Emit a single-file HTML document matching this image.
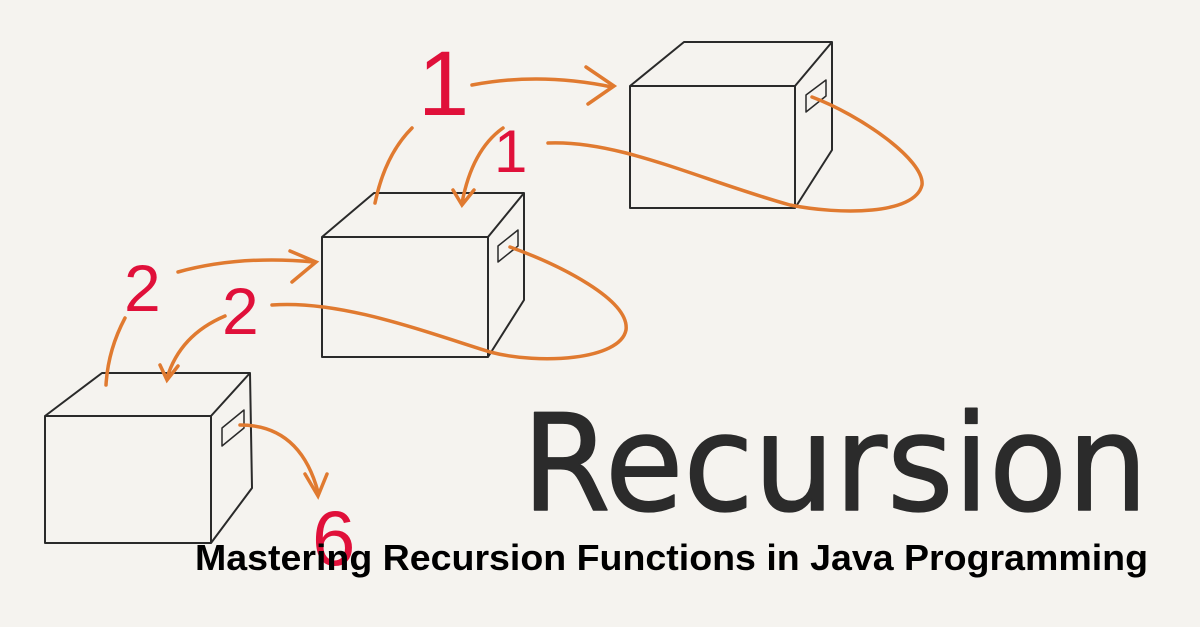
<!DOCTYPE html>
<html><head><style>
html,body{margin:0;padding:0;background:#f5f3ef;}
svg{display:block}
</style></head><body>
<svg width="1200" height="627" viewBox="0 0 1200 627" xmlns="http://www.w3.org/2000/svg">
<rect width="1200" height="627" fill="#f5f3ef"/>
<g fill="none" stroke="#2a2a2a" stroke-width="2" stroke-linejoin="round">
  <rect x="630" y="86" width="165" height="122"/>
  <path d="M630 86 L684 42 L832 42 L795 86 M832 42 L832 150 L795 208"/>
  <path d="M806 95 L826 80 L826 96 L806 112 Z" stroke-width="1.5"/>
  <rect x="322" y="237" width="166" height="120"/>
  <path d="M322 237 L374 193 L524 193 L488 237 M524 193 L524 300 L488 357"/>
  <path d="M498 246 L518 230 L518 246 L498 262 Z" stroke-width="1.5"/>
  <rect x="45" y="416" width="166" height="127"/>
  <path d="M45 416 L102 373 L250 373 L211 416 M250 373 L252 488 L211 543"/>
  <path d="M222 428 L244 410 L244 428 L222 446 Z" stroke-width="1.5"/>
</g>
<g fill="none" stroke="#e07a30" stroke-width="3.5" stroke-linecap="round">
  <path d="M472 85 Q540 72 612 87"/>
  <path d="M586 67 L614 86 L588 104"/>
  <path d="M375 203 Q385 155 412 128"/>
  <path d="M503 128 Q472 150 462 203"/>
  <path d="M453 190 L462 205 L474 190"/>
  <path d="M548 143 C620 140 700 180 790 205 C840 215 915 215 922 185 C925 160 860 115 812 97"/>
  <path d="M178 272 Q240 255 314 262"/>
  <path d="M290 251 L316 262 L292 282"/>
  <path d="M125 318 Q108 350 106 385"/>
  <path d="M225 316 Q180 335 167 378"/>
  <path d="M160 365 L167 380 L178 366"/>
  <path d="M272 305 C340 300 420 330 490 352 C540 365 620 360 626 330 C630 300 560 265 510 247"/>
  <path d="M240 425 Q300 425 318 492"/>
  <path d="M305 474 L318 496 L327 474"/>
</g>
<g fill="#e0103a" font-family="Liberation Sans, sans-serif">
  <text x="418" y="115" font-size="92">1</text>
  <text x="494" y="172" font-size="60">1</text>
  <text x="124" y="311" font-size="66">2</text>
  <text x="222" y="334" font-size="66">2</text>
  <text x="312" y="565" font-size="78">6</text>
</g>
<text x="522" y="510" font-family="DejaVu Sans, sans-serif" font-size="134" fill="#2b2b2b" stroke="#2b2b2b" stroke-width="1.5" stroke-linejoin="round" textLength="626" lengthAdjust="spacingAndGlyphs">Recursion</text>
<text x="195" y="570" font-family="Liberation Sans, sans-serif" font-weight="bold" font-size="36" fill="#000" textLength="953" lengthAdjust="spacingAndGlyphs">Mastering Recursion Functions in Java Programming</text>
</svg>
</body></html>
